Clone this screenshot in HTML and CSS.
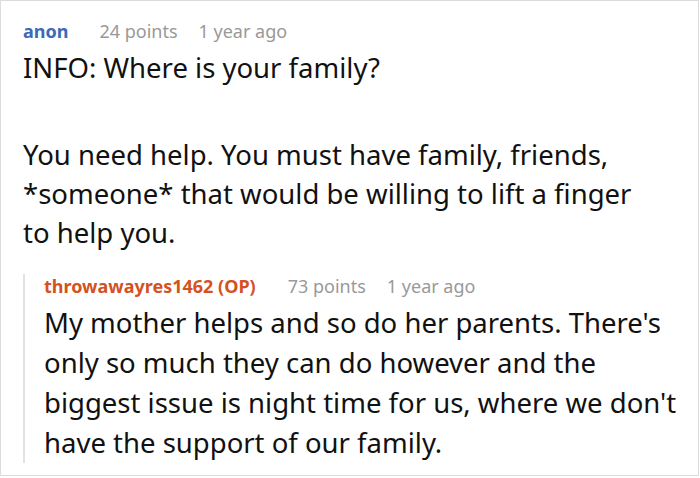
FILE: index.html
```html
<!DOCTYPE html>
<html>
<head>
<meta charset="utf-8">
<link rel="stylesheet" href="styles.css">
</head>
<body>
<div class="card">
  <div class="comment">
    <div class="meta">
      <span class="author">anon</span>
      <span class="points">24 points</span>
      <span class="time">1 year ago</span>
    </div>
    <div class="body">
      <p>INFO: Where is your family?</p>
      <p>You need help. You must have family, friends, *someone* that would be willing to lift a finger to help you.</p>
    </div>
    <div class="reply">
      <div class="meta">
        <span class="author op">throwawayres1462 (OP)</span>
        <span class="points">73 points</span>
        <span class="time">1 year ago</span>
      </div>
      <div class="body">
        <p>My mother helps and so do her parents. There's only so much they can do however and the biggest issue is night time for us, where we don't have the support of our family.</p>
      </div>
    </div>
  </div>
</div>
</body>
</html>
```
FILE: styles.css
```css
html, body {
  margin: 0;
  padding: 0;
  background: #fff;
}
body {
  font-family: "Noto Sans", "Open Sans", sans-serif;
  color: #111;
}
.card {
  box-sizing: border-box;
  width: 699px;
  height: 476px;
  border: 1px solid #dcdcdc;
  overflow: hidden;
}
.comment {
  padding: 18px 0 0 22px;
}
.meta {
  display: flex;
  font-size: 18px;
  line-height: 24px;
  color: #999;
  white-space: nowrap;
}
.author {
  font-weight: 700;
  color: #3b6bb7;
  margin-right: 31px;
}
.author.op {
  color: #d4521f;
  margin-right: 32px;
}
.points {
  margin-right: 21px;
}
.body {
  margin-top: 5px;
  font-size: 27.5px;
  line-height: 39px;
  width: 627px;
}
.body p {
  margin: 0 0 48px 0;
}
.body p:last-child {
  margin-bottom: 0;
}
.reply {
  margin-top: 22px;
  border-left: 2px solid #e2e2e2;
  padding-left: 19px;
}
.reply .body {
  width: 647px;
  line-height: 40px;
}
```
